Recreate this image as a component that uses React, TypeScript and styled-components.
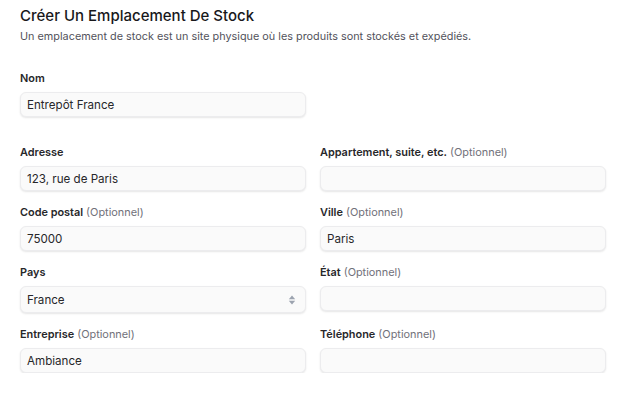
import React from "react";
import styled, { createGlobalStyle } from "styled-components";

const Global = createGlobalStyle`
  html, body { margin: 0; padding: 0; background: #ffffff; }
  body { font-family: Inter, "Noto Sans", sans-serif; color: #18181b; }
  * { box-sizing: border-box; }
`;

const Page = styled.div`
  padding: 6px 15px 0 20px;
  width: 621px;
`;

const Header = styled.header`
  display: flex;
  flex-direction: column;
  gap: 2px;
`;

const Title = styled.h1`
  margin: 0;
  font-size: 15px;
  line-height: 20px;
  font-weight: 500;
  color: #18181b;
`;

const Subtitle = styled.p`
  margin: 0;
  font-size: 10.85px;
  line-height: 16px;
  color: #52525b;
`;

const Section = styled.section<{ $top: number }>`
  margin-top: ${(p) => p.$top}px;
  display: grid;
  grid-template-columns: 286px 286px;
  column-gap: 14px;
  row-gap: 13px;
`;

const Field = styled.div`
  display: flex;
  flex-direction: column;
  gap: 6px;
`;

const Label = styled.label`
  font-size: 10.9px;
  line-height: 16px;
  font-weight: 600;
  color: #27272a;
`;

const Optional = styled.span`
  font-weight: 400;
  color: #71717a;
`;

const InputBox = styled.div<{ $h?: number }>`
  height: ${(p) => p.$h ?? 25}px;
  display: flex;
  align-items: center;
  justify-content: space-between;
  padding: 0 9px 0 6px;
  background: #fafafa;
  border: 1px solid #ececee;
  border-radius: 6px;
  box-shadow: 0 1px 2px rgba(0, 0, 0, 0.1);
  font-size: 11.6px;
  color: #27272a;
`;

const Chevrons = () => (
  <svg width="8" height="12" viewBox="0 0 8 12">
    <path d="M4 1.5 L7.2 5.3 H0.8 Z" fill="#9ca3af" />
    <path d="M4 10.5 L7.2 6.7 H0.8 Z" fill="#9ca3af" />
  </svg>
);

type F = { label: string; optional?: boolean; value?: string; select?: boolean };

const FieldView = ({ label, optional, value, select }: F) => (
  <Field>
    <Label>
      {label}
      {optional && <Optional> (Optionnel)</Optional>}
    </Label>
    <InputBox $h={select ? 27 : 25}>
      <span>{value}</span>
      {select && <Chevrons />}
    </InputBox>
  </Field>
);

const fields: F[] = [
  { label: "Adresse", value: "123, rue de Paris" },
  { label: "Appartement, suite, etc.", optional: true },
  { label: "Code postal", optional: true, value: "75000" },
  { label: "Ville", optional: true, value: "Paris" },
  { label: "Pays", value: "France", select: true },
  { label: "État", optional: true },
  { label: "Entreprise", optional: true, value: "Ambiance" },
  { label: "Téléphone", optional: true },
];

export default function App() {
  return (
    <Page>
      <Global />
      <Header>
        <Title>Créer Un Emplacement De Stock</Title>
        <Subtitle>
          Un emplacement de stock est un site physique où les produits sont stockés et expédiés.
        </Subtitle>
      </Header>
      <Section $top={26}>
        <FieldView label="Nom" value="Entrepôt France" />
      </Section>
      <Section $top={27}>
        {fields.map((f) => (
          <FieldView key={f.label} {...f} />
        ))}
      </Section>
    </Page>
  );
}
